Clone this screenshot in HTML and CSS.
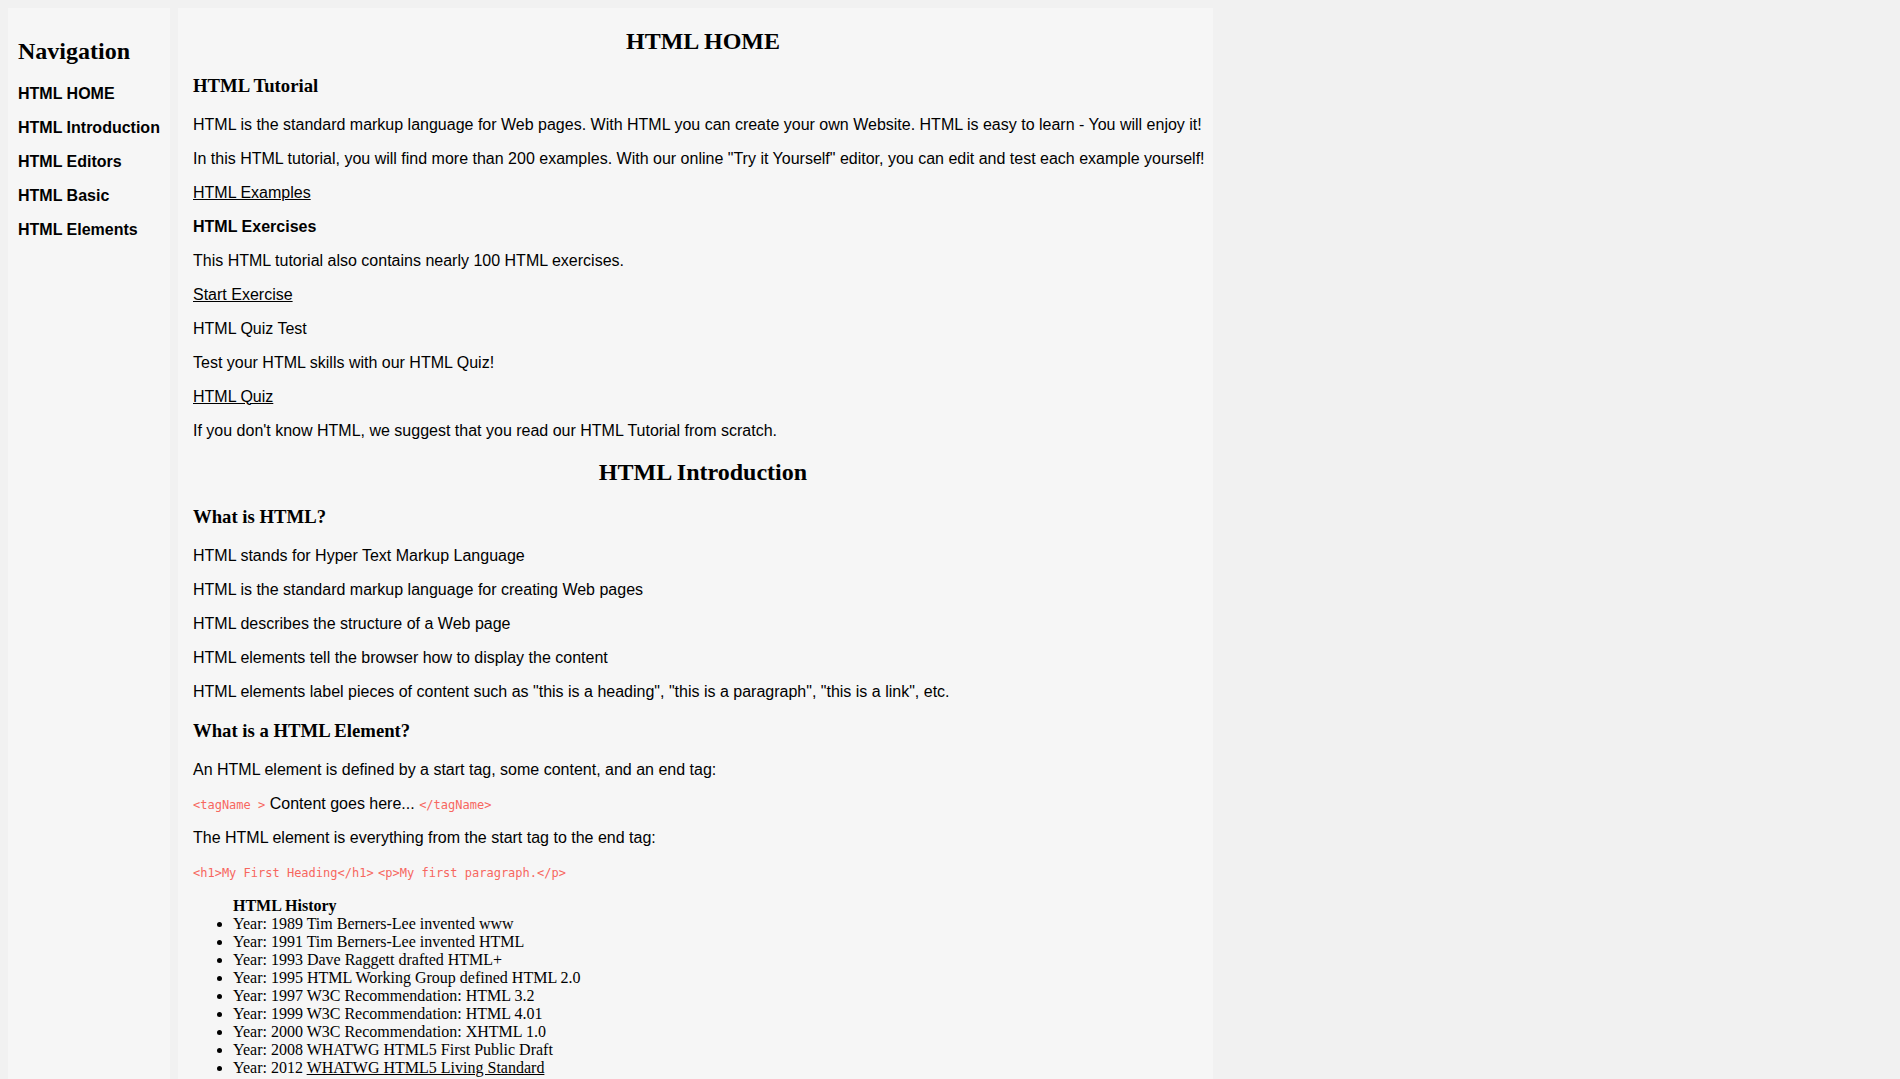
FILE: index.html
```html
<!DOCTYPE html>
<html lang="en">
<head>
<meta charset="utf-8">
<title>HTML HOME</title>
<link rel="stylesheet" href="styles.css">
</head>
<body>
<div class="page">
  <nav class="sidebar">
    <h2 class="nav-title">Navigation</h2>
    <p class="nav-item">HTML HOME</p>
    <p class="nav-item">HTML Introduction</p>
    <p class="nav-item">HTML Editors</p>
    <p class="nav-item">HTML Basic</p>
    <p class="nav-item">HTML Elements</p>
  </nav>
  <main class="content">
    <h2 class="page-title">HTML HOME</h2>
    <h3 class="section-title">HTML Tutorial</h3>
    <p class="text">HTML is the standard markup language for Web pages. With HTML you can create your own Website. HTML is easy to learn - You will enjoy it!</p>
    <p class="text">In this HTML tutorial, you will find more than 200 examples. With our online "Try it Yourself" editor, you can edit and test each example yourself!</p>
    <p class="text"><a class="link" href="#">HTML Examples</a></p>
    <p class="text text-bold">HTML Exercises</p>
    <p class="text">This HTML tutorial also contains nearly 100 HTML exercises.</p>
    <p class="text"><a class="link" href="#">Start Exercise</a></p>
    <p class="text">HTML Quiz Test</p>
    <p class="text">Test your HTML skills with our HTML Quiz!</p>
    <p class="text"><a class="link" href="#">HTML Quiz</a></p>
    <p class="text">If you don't know HTML, we suggest that you read our HTML Tutorial from scratch.</p>

    <h2 class="page-title">HTML Introduction</h2>
    <h3 class="section-title">What is HTML?</h3>
    <p class="text">HTML stands for Hyper Text Markup Language</p>
    <p class="text">HTML is the standard markup language for creating Web pages</p>
    <p class="text">HTML describes the structure of a Web page</p>
    <p class="text">HTML elements tell the browser how to display the content</p>
    <p class="text">HTML elements label pieces of content such as "this is a heading", "this is a paragraph", "this is a link", etc.</p>
    <h3 class="section-title">What is a HTML Element?</h3>
    <p class="text">An HTML element is defined by a start tag, some content, and an end tag:</p>
    <p class="text"><code class="code">&lt;tagName &gt;</code> Content goes here... <code class="code">&lt;/tagName&gt;</code></p>
    <p class="text">The HTML element is everything from the start tag to the end tag:</p>
    <p class="text"><code class="code">&lt;h1&gt;My First Heading&lt;/h1&gt;</code> <code class="code">&lt;p&gt;My first paragraph.&lt;/p&gt;</code></p>
    <ul class="history">
      <li class="history-title">HTML History</li>
      <li>Year: 1989 Tim Berners-Lee invented www</li>
      <li>Year: 1991 Tim Berners-Lee invented HTML</li>
      <li>Year: 1993 Dave Raggett drafted HTML+</li>
      <li>Year: 1995 HTML Working Group defined HTML 2.0</li>
      <li>Year: 1997 W3C Recommendation: HTML 3.2</li>
      <li>Year: 1999 W3C Recommendation: HTML 4.01</li>
      <li>Year: 2000 W3C Recommendation: XHTML 1.0</li>
      <li>Year: 2008 WHATWG HTML5 First Public Draft</li>
      <li>Year: 2012 <a class="link-serif" href="#">WHATWG HTML5 Living Standard</a></li>
    </ul>
  </main>
</div>
</body>
</html>
```

FILE: styles.css
```css
html, body {
  margin: 0;
  padding: 0;
  overflow: hidden;
  height: 100%;
}

body {
  background: #f1f1f1;
  color: #000;
  font-family: "Liberation Serif", "Times New Roman", serif;
}

.page {
  display: flex;
  align-items: stretch;
  gap: 8px;
  padding: 8px;
  box-sizing: border-box;
  min-height: 100vh;
}

.sidebar {
  width: 162px;
  flex: none;
  box-sizing: border-box;
  background: #f6f6f6;
  padding: 10px;
}

.nav-title {
  font-family: "Liberation Serif", "Times New Roman", serif;
  font-size: 24px;
  font-weight: bold;
  margin: 19.92px 0;
}

.nav-item {
  font-family: "Liberation Sans", Arial, sans-serif;
  font-size: 16px;
  font-weight: bold;
  margin: 16px 0;
  white-space: nowrap;
}

.content {
  width: 1035px;
  flex: none;
  box-sizing: border-box;
  background: #f6f6f6;
  padding: 0 0 0 15px;
  overflow: hidden;
}

.page-title {
  font-family: "Liberation Serif", "Times New Roman", serif;
  font-size: 24px;
  font-weight: bold;
  text-align: center;
  margin: 19.92px 0;
}

.section-title {
  font-family: "Liberation Serif", "Times New Roman", serif;
  font-size: 18.72px;
  font-weight: bold;
  margin: 18.72px 0;
}

.text {
  font-family: "Liberation Sans", Arial, sans-serif;
  font-size: 16px;
  margin: 16px 0;
  white-space: nowrap;
}

.text-bold {
  font-weight: bold;
}

.link {
  color: #000;
  text-decoration: underline;
}

.code {
  font-family: "DejaVu Sans Mono", "Liberation Mono", monospace;
  font-size: 12px;
  color: #f7675f;
}

.history {
  font-family: "Liberation Serif", "Times New Roman", serif;
  font-size: 16px;
  margin: 16px 0;
  padding-left: 40px;
}

.history-title {
  list-style: none;
  font-weight: bold;
}

.link-serif {
  color: #000;
  text-decoration: underline;
}
```
